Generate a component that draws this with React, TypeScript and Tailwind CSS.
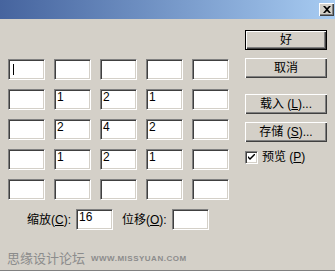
import React from "react";

const font = "font-['Liberation_Sans','Noto_Sans_CJK_SC',sans-serif]";

const rows = [
  ["", "", "", "", ""],
  ["", "1", "2", "1", ""],
  ["", "2", "4", "2", ""],
  ["", "1", "2", "1", ""],
  ["", "", "", "", ""],
];

const Field = ({ value, caret }: { value?: string; caret?: boolean }) => (
  <div className="relative h-[21px] w-[37px] border border-t-[#808080] border-l-[#808080] border-b-white border-r-white bg-white pl-[2px] text-[12px] leading-[15px] text-black shadow-[inset_1px_1px_0_#404040,inset_-1px_-1px_0_#d4d0c8]">
    {value}
    {caret && <span className="absolute left-[4px] top-[4px] h-[11px] w-px bg-black" />}
  </div>
);

const Button = ({ children, primary }: { children: React.ReactNode; primary?: boolean }) => (
  <div
    className={
      "flex h-[20px] w-[82px] items-center justify-center bg-[#d4d0c8] text-[12px] text-black " +
      (primary
        ? "border border-black shadow-[inset_1px_1px_0_#fff,inset_-1px_-1px_0_#404040,inset_-2px_-2px_0_#808080]"
        : "shadow-[inset_1px_1px_0_#fff,inset_-1px_-1px_0_#404040,inset_-2px_-2px_0_#808080]")
    }
  >
    {children}
  </div>
);

export default function App() {
  return (
    <div className={`h-[271px] w-[335px] overflow-hidden bg-[#d4d0c8] ${font}`}>
      <div className="flex h-[19px] items-center justify-end bg-gradient-to-r from-[#46649e] to-[#a8ccf2] pr-[1px]">
        <div className="flex h-[13px] w-[15px] items-center justify-center bg-[#d4d0c8] shadow-[inset_1px_1px_0_#fff,inset_-1px_-1px_0_#404040,inset_-2px_-2px_0_#808080]">
          <svg width="8" height="7" viewBox="0 0 8 7">
            <path d="M0 0h2l2 2 2-2h2L5 3.5 8 7H6L4 5 2 7H0l3-3.5z" fill="#000" />
          </svg>
        </div>
      </div>
      <div className="flex h-[252px] border-b border-[#808080]">
        <div className="w-[245px] pl-[8px] pt-[40px]">
          <div className="flex flex-col gap-[9px]">
            {rows.map((r, i) => (
              <div key={i} className="flex gap-[9px]">
                {r.map((v, j) => (
                  <Field key={j} value={v} caret={i === 0 && j === 0} />
                ))}
              </div>
            ))}
          </div>
          <div className="mt-[9px] flex items-center pl-[19px] text-[12px] text-black">
            <span className="mr-[5px]">
              缩放(<span className="underline">C</span>):
            </span>
            <Field value="16" />
            <span className="ml-[9px] mr-[5px]">
              位移(<span className="underline">O</span>):
            </span>
            <Field />
          </div>
          <div className="mt-[19px] flex items-center -ml-[1px] text-[#8c8c8c]">
            <span className="text-[13px]">思缘设计论坛</span>
            <span className="ml-[6px] text-[8px] font-bold tracking-[0.5px]">WWW.MISSYUAN.COM</span>
          </div>
        </div>
        <div className="flex flex-col pt-[11px]">
          <Button primary>好</Button>
          <div className="mt-[8px]">
            <Button>取消</Button>
          </div>
          <div className="mt-[16px]">
            <Button>
              载入 (<span className="underline">L</span>)...
            </Button>
          </div>
          <div className="mt-[8px]">
            <Button>
              存储 (<span className="underline">S</span>)...
            </Button>
          </div>
          <div className="mt-[6px] flex items-center text-[12px] text-black">
            <div className="flex h-[13px] w-[13px] items-center justify-center border border-t-[#808080] border-l-[#808080] border-b-white border-r-white bg-white shadow-[inset_1px_1px_0_#404040,inset_-1px_-1px_0_#d4d0c8]">
              <svg width="7" height="7" viewBox="0 0 7 7">
                <path d="M0 2l2 2 5-5v2L2 6 0 4z" fill="#000" />
              </svg>
            </div>
            <span className="ml-[4px]">
              预览 (<span className="underline">P</span>)
            </span>
          </div>
        </div>
      </div>
    </div>
  );
}
